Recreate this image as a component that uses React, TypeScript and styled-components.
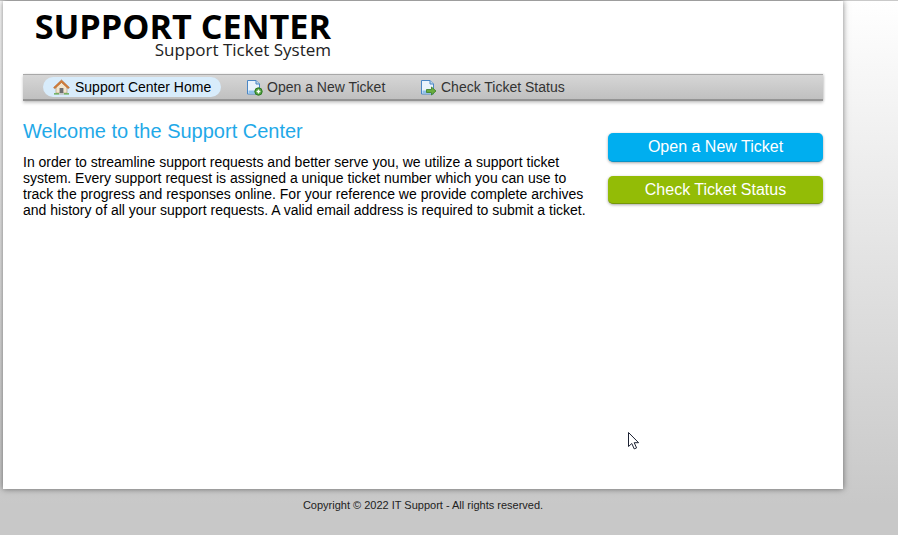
import React from "react";
import styled, { createGlobalStyle } from "styled-components";

const Global = createGlobalStyle`
  html, body { margin: 0; padding: 0; height: 100%; }
  body {
    font-family: "Liberation Sans", Arial, sans-serif;
    background: #c8c8c8 linear-gradient(to bottom, #ffffff 0%, #c8c8c8 100%) no-repeat;
    background-size: 100% 505px;
    overflow: hidden;
  }
`;

const TopLine = styled.div`
  height: 1px;
  background: #c9c9c9;
`;
const Page = styled.div`
  position: relative;
  box-sizing: border-box;
  width: 840px;
  height: 488px;
  margin-left: 3px;
  padding: 0 20px;
  background: #fff;
  box-shadow: 0 0 6px rgba(0, 0, 0, 0.5);
`;
const Header = styled.header`
  height: 73px;
  box-sizing: border-box;
  padding: 7px 0 0 11px;
`;
const Logo = styled.div`
  width: 297px;
  font-family: "Open Sans", sans-serif;
  color: #000;
  text-align: right;
`;
const LogoTitle = styled.div`
  font-size: 34.2px;
  line-height: 35px;
  font-weight: 700;
  white-space: nowrap;
`;
const LogoSub = styled.div`
  font-size: 17px;
  line-height: 14px;
  color: #222;
  white-space: nowrap;
`;
const Nav = styled.nav`
  height: 27px;
  box-sizing: border-box;
  display: flex;
  align-items: center;
  padding: 0 0 0 20px;
  background: linear-gradient(to bottom, #d6d6d6, #c0c0c0);
  border-top: 1px solid #a8a8a8;
  border-bottom: 2px solid #949494;
  box-shadow: 0 2px 3px rgba(0, 0, 0, 0.2), 1px 0 2px rgba(0, 0, 0, 0.12);
`;
const NavItem = styled.a<{ $active?: boolean; $w: number; $lead?: number }>`
  box-sizing: border-box;
  width: ${(p) => p.$w}px;
  height: 20px;
  margin-left: ${(p) => p.$lead ?? 0}px;
  display: flex;
  align-items: center;
  gap: ${(p) => (p.$active ? 5 : 4)}px;
  padding-left: ${(p) => (p.$active ? 10 : 11)}px;
  border-radius: 10px;
  font-size: 14px;
  color: ${(p) => (p.$active ? "#000" : "#333")};
  background: ${(p) => (p.$active ? "#d8ecfb" : "transparent")};
  text-decoration: none;
  white-space: nowrap;
`;
const Main = styled.main`
  display: flex;
  justify-content: space-between;
  margin-top: 19px;
`;
const Intro = styled.section`
  width: 570px;
`;
const Heading = styled.h1`
  margin: 0 0 11px;
  font-size: 20px;
  line-height: 23px;
  font-weight: 400;
  color: #1fa9e8;
`;
const Para = styled.p`
  margin: 0;
  font-size: 14px;
  line-height: 16px;
  color: #000;
  white-space: nowrap;
`;
const Side = styled.aside`
  width: 215px;
  padding-top: 13px;
  display: flex;
  flex-direction: column;
  gap: 14px;
`;
const Action = styled.a<{ $bg: string; $edge: string; $h: number }>`
  height: ${(p) => p.$h}px;
  display: flex;
  align-items: center;
  justify-content: center;
  box-sizing: border-box;
  border-radius: 5px;
  font-size: 16px;
  color: #fff;
  background: ${(p) => p.$bg};
  border-bottom: 1px solid ${(p) => p.$edge};
  box-shadow: 0 1px 3px rgba(0, 0, 0, 0.35);
  text-decoration: none;
`;
const Cursor = styled.svg`
  position: absolute;
  left: 624px;
  top: 430px;
`;
const Footer = styled.footer`
  margin-top: 10px;
  margin-left: 3px;
  width: 840px;
  text-align: center;
  font-size: 11px;
  line-height: 12px;
  color: #222;
`;

const PageIcon = ({ kind }: { kind: "plus" | "arrow" }) => (
  <svg width="17" height="17" viewBox="0 0 17 17">
    <path d="M1.5 1.5h8.5l3.5 3.5v10h-12z" fill="#eaf3fc" stroke="#4a86c5" />
    <path d="M10 1.5v3.5h3.5" fill="#bcd6ee" stroke="#4a86c5" />
    <path d="M2.5 11.5h8v3h-8z" fill="#8fc0ea" />
    {kind === "plus" ? (
      <>
        <circle cx="12.5" cy="12.5" r="3.7" fill="#4f9f3a" stroke="#2e7a25" />
        <path d="M10.6 12.5h3.8M12.5 10.6v3.8" stroke="#fff" strokeWidth="1.4" />
      </>
    ) : (
      <path d="M6.5 10.5h5v-2.5l4.5 4-4.5 4v-2.5h-5z" fill="#69ad3d" stroke="#3a7d23" strokeWidth="0.8" />
    )}
  </svg>
);

const HomeIcon = () => (
  <svg width="17" height="16" viewBox="0 0 17 16">
    <path d="M3 8v6h11V8L8.5 3z" fill="#f2e6cf" stroke="#a8946e" strokeWidth="0.6" />
    <path d="M.6 8.6 8.5 1l7.9 7.6-1.3 1L8.5 3.4 1.9 9.6z" fill="#d9803a" stroke="#a85d25" strokeWidth="0.6" />
    <rect x="6.6" y="9" width="3.8" height="5" fill="#6e6e6e" />
    <path d="M1 14.2h5v1.4H1zM11 14.2h5v1.4h-5z" fill="#58a23c" />
    <path d="M6 14.6h5v1H6z" fill="#bdbdbd" />
  </svg>
);

export default function App() {
  return (
    <>
      <Global />
      <TopLine />
      <Page>
        <Header>
          <Logo>
            <LogoTitle>SUPPORT CENTER</LogoTitle>
            <LogoSub>Support Ticket System</LogoSub>
          </Logo>
        </Header>
        <Nav>
          <NavItem $active $w={178} href="#">
            <HomeIcon />
            Support Center Home
          </NavItem>
          <NavItem $w={174} $lead={14} href="#">
            <PageIcon kind="plus" />
            Open a New Ticket
          </NavItem>
          <NavItem $w={170} href="#">
            <PageIcon kind="arrow" />
            Check Ticket Status
          </NavItem>
        </Nav>
        <Main>
          <Intro>
            <Heading>Welcome to the Support Center</Heading>
            <Para>
              In order to streamline support requests and better serve you, we utilize a support ticket
              <br />
              system. Every support request is assigned a unique ticket number which you can use to
              <br />
              track the progress and responses online. For your reference we provide complete archives
              <br />
              and history of all your support requests. A valid email address is required to submit a ticket.
            </Para>
          </Intro>
          <Side>
            <Action $bg="#00aeef" $edge="#0a93c7" $h={29} href="#">
              Open a New Ticket
            </Action>
            <Action $bg="#93bc06" $edge="#75960a" $h={28} href="#">
              Check Ticket Status
            </Action>
          </Side>
        </Main>
        <Cursor width="14" height="20" viewBox="0 0 14 20">
          <path d="M1.5 1.5v14l3.3-3 2.4 5.4 2.4-1-2.4-5.2h4.4z" fill="#fff" stroke="#1c2233" strokeWidth="1" />
        </Cursor>
      </Page>
      <Footer>Copyright © 2022 IT Support - All rights reserved.</Footer>
    </>
  );
}
